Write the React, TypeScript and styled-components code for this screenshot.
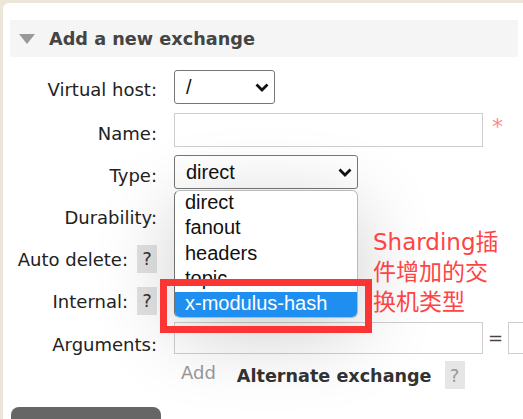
import React from 'react';
import styled, { createGlobalStyle } from 'styled-components';

const GlobalStyle = createGlobalStyle`
  html, body { margin: 0; padding: 0; }
  body {
    background: #ece6d8;
    font-family: "DejaVu Sans", Verdana, sans-serif;
    width: 523px;
    height: 419px;
    overflow: hidden;
  }
`;

const Page = styled.div`
  position: relative;
  padding: 3px 0 0 3px;
  height: 419px;
  box-sizing: border-box;
`;

const Panel = styled.div`
  background: #fff;
  border-top-left-radius: 6px;
  height: 100%;
  padding: 17px 0 0 7px;
  box-sizing: border-box;
  overflow: hidden;
`;

const Header = styled.div`
  width: 508px;
  height: 37px;
  background: #f5f5f5;
  display: flex;
  align-items: center;
`;

const Triangle = styled.span`
  width: 0;
  height: 0;
  border-left: 8px solid transparent;
  border-right: 8px solid transparent;
  border-top: 10px solid #999;
  margin: 0 14px 0 9px;
`;

const Title = styled.h2`
  margin: 0;
  font-size: 17.7px;
  font-weight: bold;
  color: #444;
`;

const Form = styled.div`
  margin-top: 13px;
  display: flex;
  flex-direction: column;
`;

const Row = styled.div<{ $h?: number }>`
  display: grid;
  grid-template-columns: 147px 1fr;
  column-gap: 17px;
  height: ${(p) => p.$h ?? 42}px;
`;

const Label = styled.div<{ $pt?: number }>`
  display: flex;
  justify-content: flex-end;
  align-items: flex-start;
  gap: 9px;
  padding-top: ${(p) => p.$pt ?? 11}px;
  font-size: 18px;
  line-height: 22px;
  color: #222;
  white-space: nowrap;
`;

const Help = styled.span<{ $muted?: boolean }>`
  display: flex;
  align-items: center;
  justify-content: center;
  width: 20px;
  height: 28px;
  margin-top: ${(p) => (p.$muted ? 0 : -4)}px;
  background: ${(p) => (p.$muted ? '#e6e6e6' : '#e2e2e2')};
  color: ${(p) => (p.$muted ? '#999' : '#333')};
  font-size: 18px;
  font-weight: normal;
  flex-shrink: 0;
`;

const Value = styled.div<{ $pt?: number }>`
  display: flex;
  align-items: flex-start;
  padding-top: ${(p) => p.$pt ?? 1}px;
  white-space: nowrap;
`;

const SelectBox = styled.div<{ $w: number }>`
  width: ${(p) => p.$w}px;
  height: 34px;
  box-sizing: border-box;
  border: 1px solid #767676;
  border-radius: 3px;
  display: flex;
  align-items: center;
  justify-content: space-between;
  padding: 0 5px 0 11px;
  font-family: "Liberation Sans", Arial, sans-serif;
  font-size: 20px;
  color: #111;
  background: #fff;
  flex-shrink: 0;
`;

const TextInput = styled.input<{ $w: number; $h?: number }>`
  width: ${(p) => p.$w}px;
  height: ${(p) => p.$h ?? 34}px;
  box-sizing: border-box;
  border: 1px solid #cfcfcf;
  border-radius: 0;
  margin: 0;
  padding: 0 6px;
  background: #fff;
  flex-shrink: 0;
  outline: none;
`;

const Required = styled.span`
  color: #f88;
  font-size: 22px;
  line-height: 22px;
  margin: 3px 0 0 9px;
`;

const Equals = styled.span`
  font-size: 18px;
  line-height: 32px;
  color: #444;
  margin: 0 5px;
`;

const AddRow = styled.div`
  display: flex;
  align-items: flex-start;
  margin-left: 171px;
  height: 28px;
  white-space: nowrap;
`;

const AddLink = styled.span`
  font-size: 18px;
  line-height: 22px;
  color: #999;
  margin-top: 1px;
`;

const Alternate = styled.span`
  font-size: 17.6px;
  line-height: 22px;
  font-weight: bold;
  color: #333;
  margin: 4px 13px 0 21px;
`;

const SubmitButton = styled.div`
  width: 150px;
  height: 30px;
  margin: 18px 0 0 1px;
  background: #666;
  border-radius: 8px 8px 0 0;
`;

const Popup = styled.ul`
  position: absolute;
  left: 174px;
  top: 190px;
  width: 184px;
  height: 128px;
  margin: 0;
  padding: 0;
  list-style: none;
  background: #fff;
  border: 1px solid #b9b9b9;
  border-left-color: #707070;
  border-radius: 6px;
  box-shadow: 0 16px 80px rgba(0, 0, 0, 0.2);
  overflow: hidden;
  box-sizing: border-box;
  font-family: "Liberation Sans", Arial, sans-serif;
  font-size: 20px;
  line-height: 23px;
`;

const Option = styled.li<{ $active?: boolean }>`
  height: 25.3px;
  box-sizing: border-box;
  padding: 0 0 2px 10px;
  display: flex;
  align-items: center;
  background: ${(p) => (p.$active ? '#1f8ef1' : 'transparent')};
  color: ${(p) => (p.$active ? '#fff' : '#111')};
`;

const Highlight = styled.div`
  position: absolute;
  left: 160px;
  top: 279px;
  width: 212px;
  height: 54px;
  box-sizing: border-box;
  border: 7px solid #fb3434;
`;

const Note = styled.div`
  position: absolute;
  left: 373px;
  top: 227px;
  font-family: "DejaVu Sans", "Noto Sans CJK SC", sans-serif;
  font-size: 23px;
  line-height: 30px;
  color: #ff4444;
  white-space: nowrap;
`;

const Chevron = () => (
  <svg width="14" height="9" viewBox="0 0 14 9">
    <path d="M1.5 1.5 L7 7 L12.5 1.5" fill="none" stroke="#111" strokeWidth="2.8" />
  </svg>
);

export default function App() {
  return (
    <>
      <GlobalStyle />
      <Page>
        <Panel>
          <Header>
            <Triangle />
            <Title>Add a new exchange</Title>
          </Header>
          <Form>
            <Row>
              <Label $pt={9}>Virtual host:</Label>
              <Value $pt={0}>
                <SelectBox $w={101}>
                  <span>/</span>
                  <Chevron />
                </SelectBox>
              </Value>
            </Row>
            <Row>
              <Label>Name:</Label>
              <Value>
                <TextInput $w={309} />
                <Required>*</Required>
              </Value>
            </Row>
            <Row>
              <Label>Type:</Label>
              <Value>
                <SelectBox $w={184}>
                  <span>direct</span>
                  <Chevron />
                </SelectBox>
              </Value>
            </Row>
            <Row>
              <Label>Durability:</Label>
              <Value>
                <SelectBox $w={120} />
              </Value>
            </Row>
            <Row>
              <Label>
                Auto delete:<Help>?</Help>
              </Label>
              <Value>
                <SelectBox $w={80} />
              </Value>
            </Row>
            <Row>
              <Label>
                Internal:<Help>?</Help>
              </Label>
              <Value>
                <SelectBox $w={80} />
              </Value>
            </Row>
            <Row $h={39}>
              <Label $pt={12}>Arguments:</Label>
              <Value $pt={0}>
                <TextInput $w={309} $h={32} />
                <Equals>=</Equals>
                <TextInput $w={120} $h={32} />
              </Value>
            </Row>
          </Form>
          <AddRow>
            <AddLink>Add</AddLink>
            <Alternate>Alternate exchange</Alternate>
            <Help $muted>?</Help>
          </AddRow>
          <SubmitButton />
        </Panel>
        <Popup>
          <Option>direct</Option>
          <Option>fanout</Option>
          <Option>headers</Option>
          <Option>topic</Option>
          <Option $active>x-modulus-hash</Option>
        </Popup>
        <Highlight />
        <Note>
          Sharding插
          <br />
          件增加的交
          <br />
          换机类型
        </Note>
      </Page>
    </>
  );
}
